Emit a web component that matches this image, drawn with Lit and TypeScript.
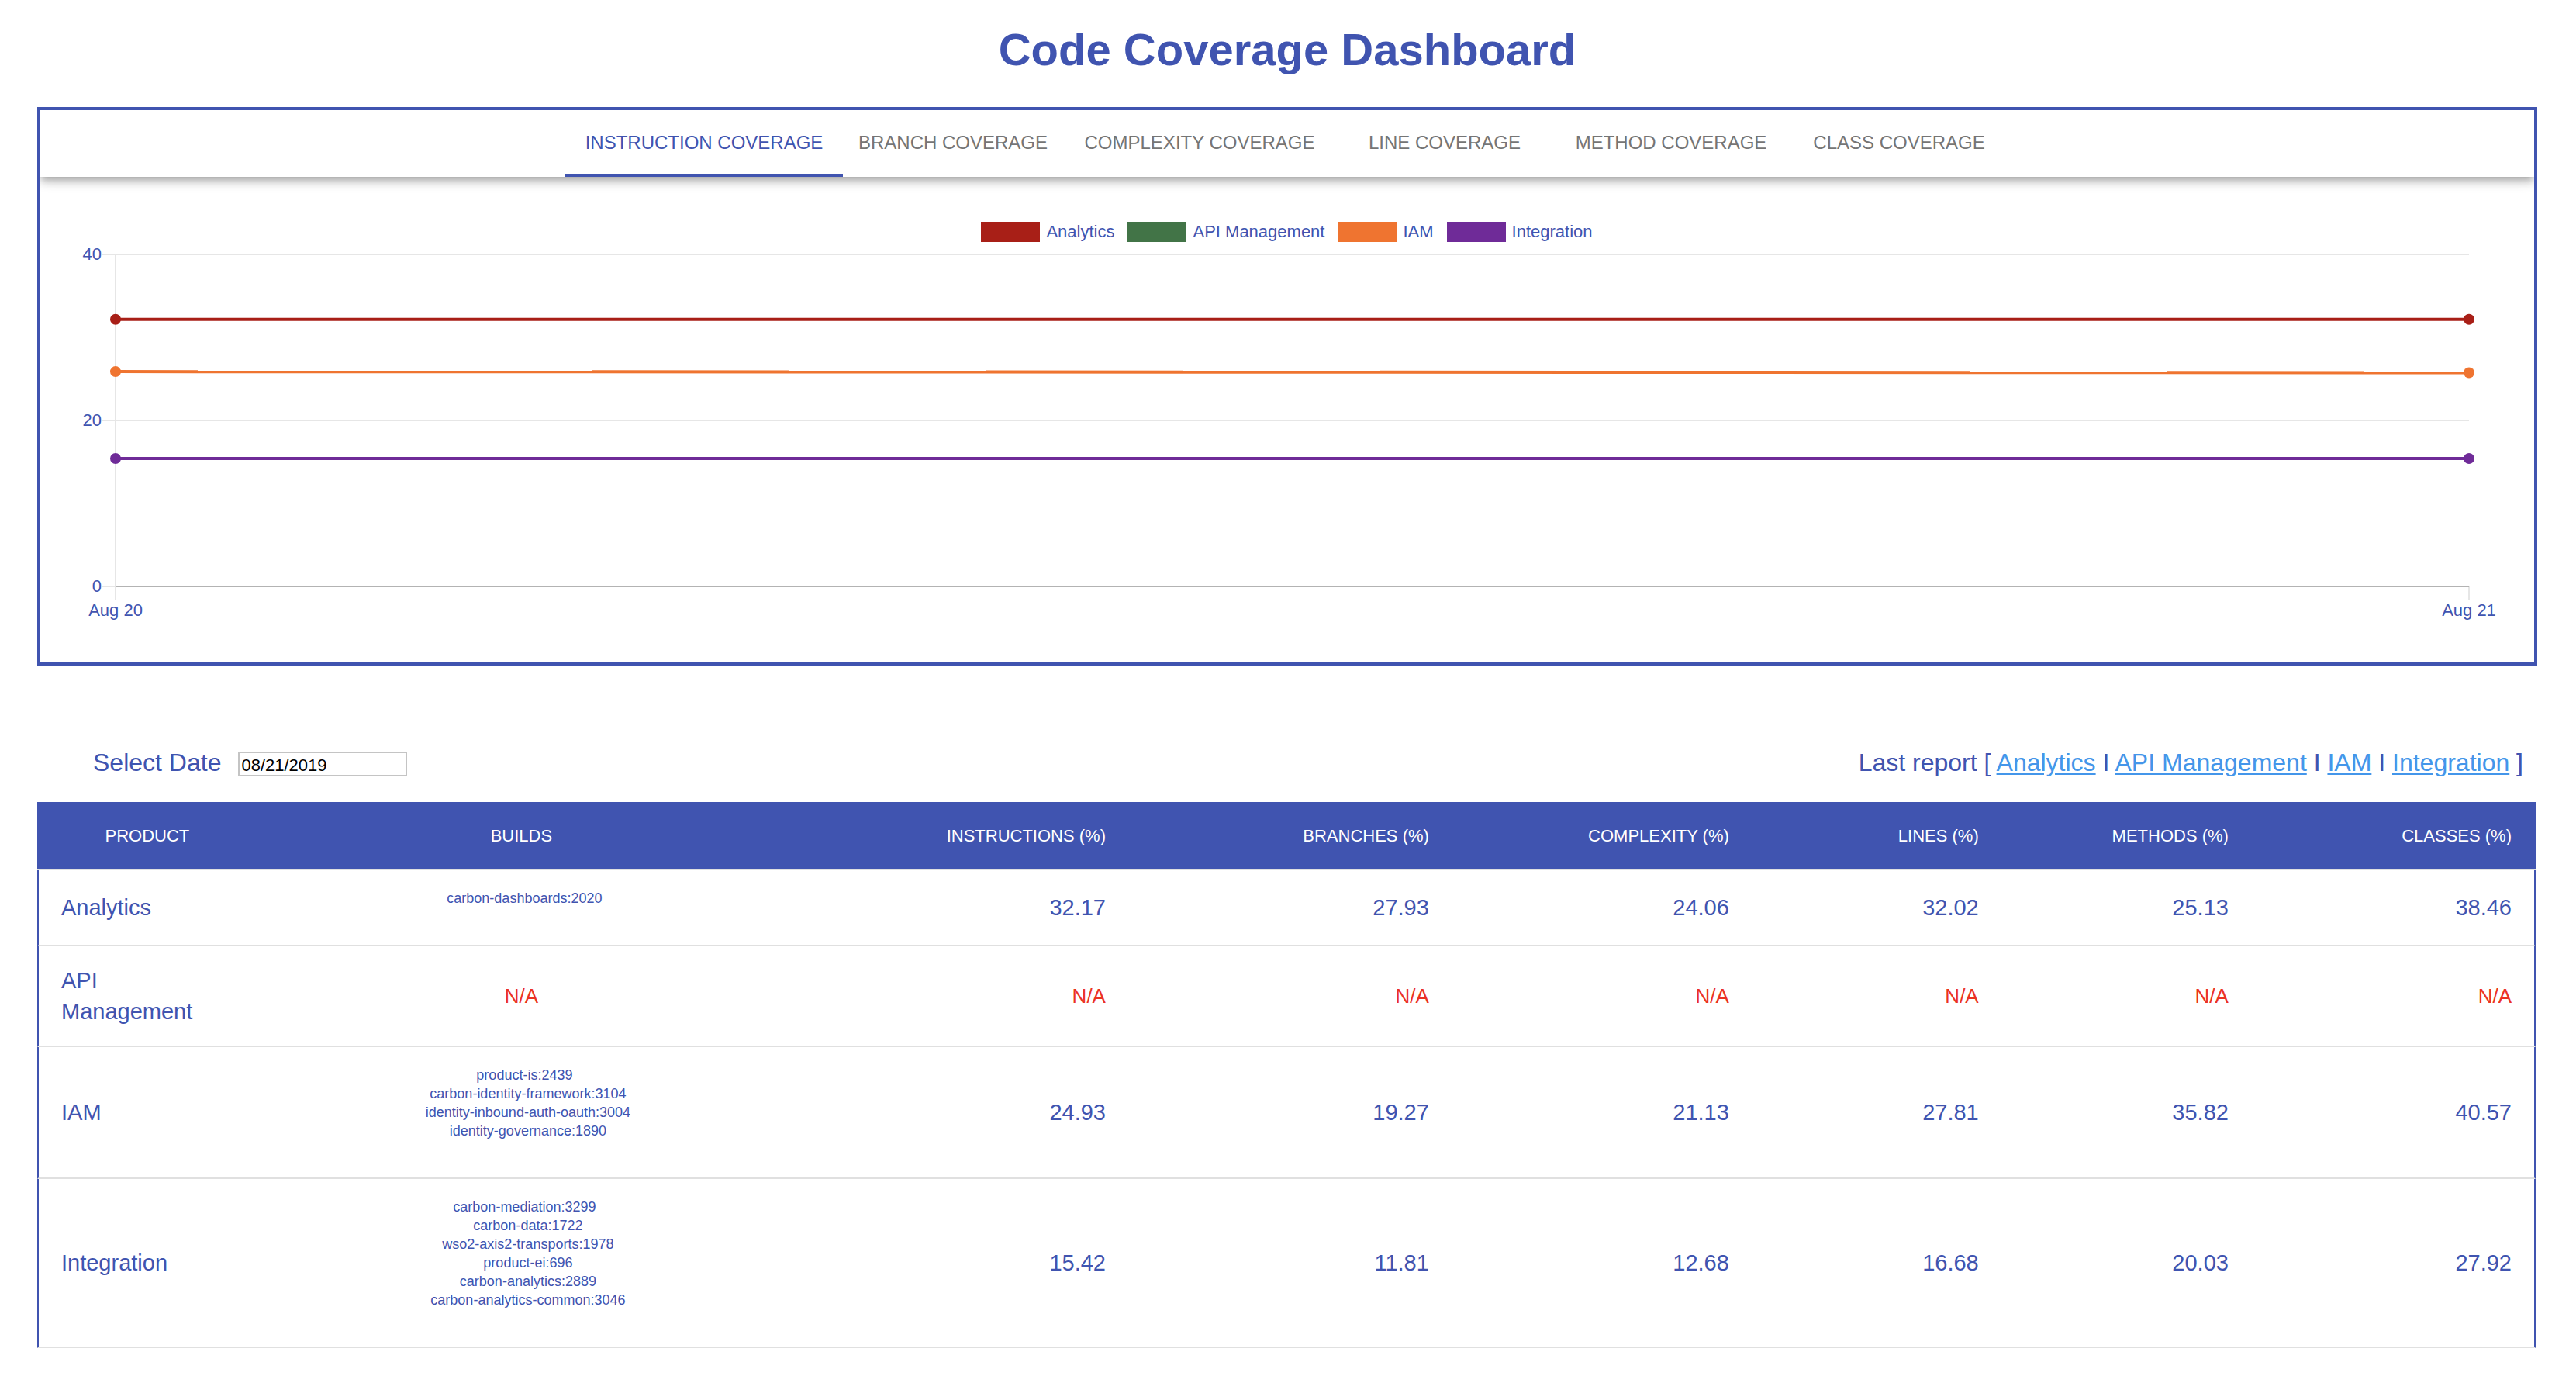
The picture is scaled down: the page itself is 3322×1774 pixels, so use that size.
import { LitElement, css, html, svg } from "lit";
import { customElement, property, state } from "lit/decorators.js";
import { classMap } from "lit/directives/class-map.js";

interface Series {
  name: string;
  color: string;
  values: [number, number] | null;
}

interface ProductRow {
  product: string;
  builds: string[];
  coverage: string[];
}

const TABS = ["Instruction", "Branch", "Complexity", "Line", "Method", "Class"];

const SERIES: Series[] = [
  { name: "Analytics", color: "#a81f17", values: [32.17, 32.17] },
  { name: "API Management", color: "#427447", values: null },
  { name: "IAM", color: "#ef7430", values: [25.88, 25.75] },
  { name: "Integration", color: "#6f2b98", values: [15.42, 15.42] },
];

const METRICS = ["Instructions", "Branches", "Complexity", "Lines", "Methods", "Classes"];

const ROWS: ProductRow[] = [
  {
    product: "Analytics",
    builds: ["carbon-dashboards:2020"],
    coverage: ["32.17", "27.93", "24.06", "32.02", "25.13", "38.46"],
  },
  { product: "API Management", builds: [], coverage: [] },
  {
    product: "IAM",
    builds: [
      "product-is:2439",
      "carbon-identity-framework:3104",
      "identity-inbound-auth-oauth:3004",
      "identity-governance:1890",
    ],
    coverage: ["24.93", "19.27", "21.13", "27.81", "35.82", "40.57"],
  },
  {
    product: "Integration",
    builds: [
      "carbon-mediation:3299",
      "carbon-data:1722",
      "wso2-axis2-transports:1978",
      "product-ei:696",
      "carbon-analytics:2889",
      "carbon-analytics-common:3046",
    ],
    coverage: ["15.42", "11.81", "12.68", "16.68", "20.03", "27.92"],
  },
];

@customElement("coverage-chart")
class CoverageChart extends LitElement {
  @property({ attribute: false }) series: Series[] = [];

  static styles = css`
    :host {
      display: block;
      padding: 58px 84px 48px 97px;
    }
    .legend {
      display: flex;
      justify-content: center;
      gap: 17px;
      margin: 0 0 16px;
      padding: 0 14px 0 0;
      list-style: none;
    }
    .entry {
      display: flex;
      align-items: center;
      gap: 8px;
      font-size: 22px;
      line-height: 26px;
    }
    .swatch {
      width: 76px;
      height: 26px;
    }
    .plot {
      display: block;
      width: 100%;
      height: 478px;
      overflow: visible;
    }
    .grid {
      stroke: #e6e6e6;
      stroke-width: 2;
    }
    .zero {
      stroke: #b3b3b3;
      stroke-width: 2;
    }
    .line {
      stroke-width: 4;
      shape-rendering: geometricPrecision;
    }
    .label {
      fill: currentColor;
      font-size: 22px;
    }
  `;

  private y(value: number) {
    return 428 - (value * 428) / 40;
  }

  render() {
    return html`
      <ul class="legend">
        ${this.series.map(
          (s) => html`<li class="entry">
            <span class="swatch" style="background:${s.color}"></span>${s.name}
          </li>`
        )}
      </ul>
      <svg class="plot" role="img" aria-label="Coverage by product">
        ${[40, 20, 0].map(
          (tick) => svg`
            <line class="grid" x1="-17" x2="100%" y1=${this.y(tick)} y2=${this.y(tick)}></line>
            <text class="label" x="-18" y=${this.y(tick) + 7} text-anchor="end">${tick}</text>`
        )}
        <line class="grid" x1="0" x2="0" y1="0" y2="446"></line>
        <line class="grid" x1="100%" x2="100%" y1="428" y2="446"></line>
        <line class="zero" x1="0" x2="100%" y1="428" y2="428"></line>
        <text class="label" x="0" y="466" text-anchor="middle">Aug 20</text>
        <text class="label" x="100%" y="466" text-anchor="middle">Aug 21</text>
        ${this.series.map((s) => {
          if (!s.values) return null;
          const [from, to] = s.values.map((v) => this.y(v));
          return svg`
            <line class="line" stroke=${s.color} x1="0" x2="100%" y1=${from} y2=${to}></line>
            <circle fill=${s.color} cx="0" cy=${from} r="7"></circle>
            <circle fill=${s.color} cx="100%" cy=${to} r="7"></circle>`;
        })}
      </svg>
    `;
  }
}

@customElement("coverage-table")
class CoverageTable extends LitElement {
  @property({ attribute: false }) rows: ProductRow[] = [];

  static styles = css`
    :host {
      display: block;
    }
    .table {
      width: 100%;
      table-layout: fixed;
      border-collapse: separate;
      border-spacing: 0;
    }
    .c-product { width: 8.81%; }
    .c-builds { width: 21.14%; }
    .c-instructions { width: 13.78%; }
    .c-branches { width: 12.94%; }
    .c-complexity { width: 12.01%; }
    .c-lines { width: 9.99%; }
    .c-methods { width: 10%; }
    .c-classes { width: 11.33%; }
    .head {
      padding: 25px 31px 23px;
      border-bottom: 2px solid #e0e0e0;
      background: #4054b0;
      color: #fff;
      font-size: 22px;
      font-weight: 400;
      line-height: 38px;
      text-align: right;
      text-transform: uppercase;
    }
    .head.center {
      text-align: center;
    }
    .cell {
      padding: 24px 31px;
      border-bottom: 2px solid #e0e0e0;
      font-size: 29px;
      font-weight: 400;
      line-height: 40px;
      text-align: right;
    }
    .cell.product {
      padding-left: 29px;
      border-left: 2px solid #4054b0;
      text-align: left;
    }
    .cell:last-child {
      padding-right: 29px;
      border-right: 2px solid #4054b0;
    }
    .cell.builds {
      text-align: center;
    }
    .cell.missing {
      color: #eb3223;
      font-size: 26px;
    }
    .list {
      margin: 0;
      padding: 0 0 24px;
      list-style: none;
      font-size: 18px;
      line-height: 24px;
    }
    .build {
      padding-left: 17px;
    }
    .build:first-child {
      padding-left: 8px;
    }
  `;

  private row(r: ProductRow) {
    const missing = r.coverage.length === 0;
    return html`<tr>
      <th class="cell product" scope="row">${r.product}</th>
      <td class=${classMap({ cell: true, builds: true, missing })}>
        ${missing
          ? "N/A"
          : html`<ul class="list">
              ${r.builds.map((b) => html`<li class="build">${b}</li>`)}
            </ul>`}
      </td>
      ${METRICS.map(
        (_, i) => html`<td class=${classMap({ cell: true, missing })}>${missing ? "N/A" : r.coverage[i]}</td>`
      )}
    </tr>`;
  }

  render() {
    return html`<table class="table">
      <colgroup>
        <col class="c-product" />
        <col class="c-builds" />
        ${METRICS.map((m) => html`<col class="c-${m.toLowerCase()}" />`)}
      </colgroup>
      <thead>
        <tr>
          <th class="head center" scope="col">Product</th>
          <th class="head center" scope="col">Builds</th>
          ${METRICS.map((m) => html`<th class="head" scope="col">${m} (%)</th>`)}
        </tr>
      </thead>
      <tbody>
        ${this.rows.map((r) => this.row(r))}
      </tbody>
    </table>`;
  }
}

@customElement("app-root")
class AppRoot extends LitElement {
  @state() private active = 0;

  static styles = css`
    :host {
      display: block;
      box-sizing: border-box;
      padding: 28px 50px 36px 48px;
      background: #fff;
      color: #4054b0;
      font-family: "Liberation Sans", Arial, Helvetica, sans-serif;
    }
    .title {
      margin: 0 0 38px;
      font-size: 58px;
      font-weight: 700;
      line-height: 72px;
      text-align: center;
    }
    .card {
      overflow: hidden;
      border: 4px solid #4054b0;
    }
    .tabs {
      display: grid;
      grid-template-columns: 358px 284px 352px 280px 304px 284px;
      justify-content: center;
      height: 86px;
      box-shadow:
        0 4px 8px -2px rgba(0, 0, 0, 0.2),
        0 8px 10px 0 rgba(0, 0, 0, 0.14),
        0 2px 20px 0 rgba(0, 0, 0, 0.12);
    }
    .tab {
      padding: 2px 0 0;
      border: 0;
      border-bottom: 4px solid transparent;
      background: none;
      color: #757575;
      font: inherit;
      font-size: 24px;
      text-transform: uppercase;
      white-space: nowrap;
      cursor: pointer;
    }
    .tab.active {
      border-bottom-color: #4054b0;
      color: #4054b0;
    }
    .toolbar {
      display: flex;
      align-items: baseline;
      justify-content: space-between;
      padding: 105px 18px 31px 72px;
      font-size: 32px;
      line-height: 40px;
    }
    .picker {
      display: flex;
      align-items: baseline;
      gap: 22px;
    }
    .date {
      box-sizing: border-box;
      width: 218px;
      height: 32px;
      padding: 4px 2px 0;
      border: 2px solid #c4c4c4;
      border-radius: 0;
      background: #fff;
      color: #000;
      font: inherit;
      font-size: 22px;
      line-height: 24px;
    }
    .reports {
      margin: 0;
    }
    .link {
      color: #4496ea;
      text-decoration: underline;
    }
    .products {
      margin-right: 2px;
    }
  `;

  render() {
    const [first, ...rest] = SERIES;
    return html`
      <h1 class="title">Code Coverage Dashboard</h1>
      <section class="card">
        <div class="tabs" role="tablist">
          ${TABS.map(
            (t, i) => html`<button
              class=${classMap({ tab: true, active: i === this.active })}
              role="tab"
              aria-selected=${i === this.active}
              @click=${() => (this.active = i)}
            >
              ${t} Coverage
            </button>`
          )}
        </div>
        <coverage-chart .series=${SERIES}></coverage-chart>
      </section>
      <div class="toolbar">
        <div class="picker">
          <label for="date">Select Date</label>
          <input class="date" id="date" type="text" value="08/21/2019" />
        </div>
        <p class="reports">
          Last report [ <a class="link" href="#">${first.name}</a>${rest.map(
            (s) => html` I <a class="link" href="#">${s.name}</a>`
          )} ]
        </p>
      </div>
      <coverage-table class="products" .rows=${ROWS}></coverage-table>
    `;
  }
}
